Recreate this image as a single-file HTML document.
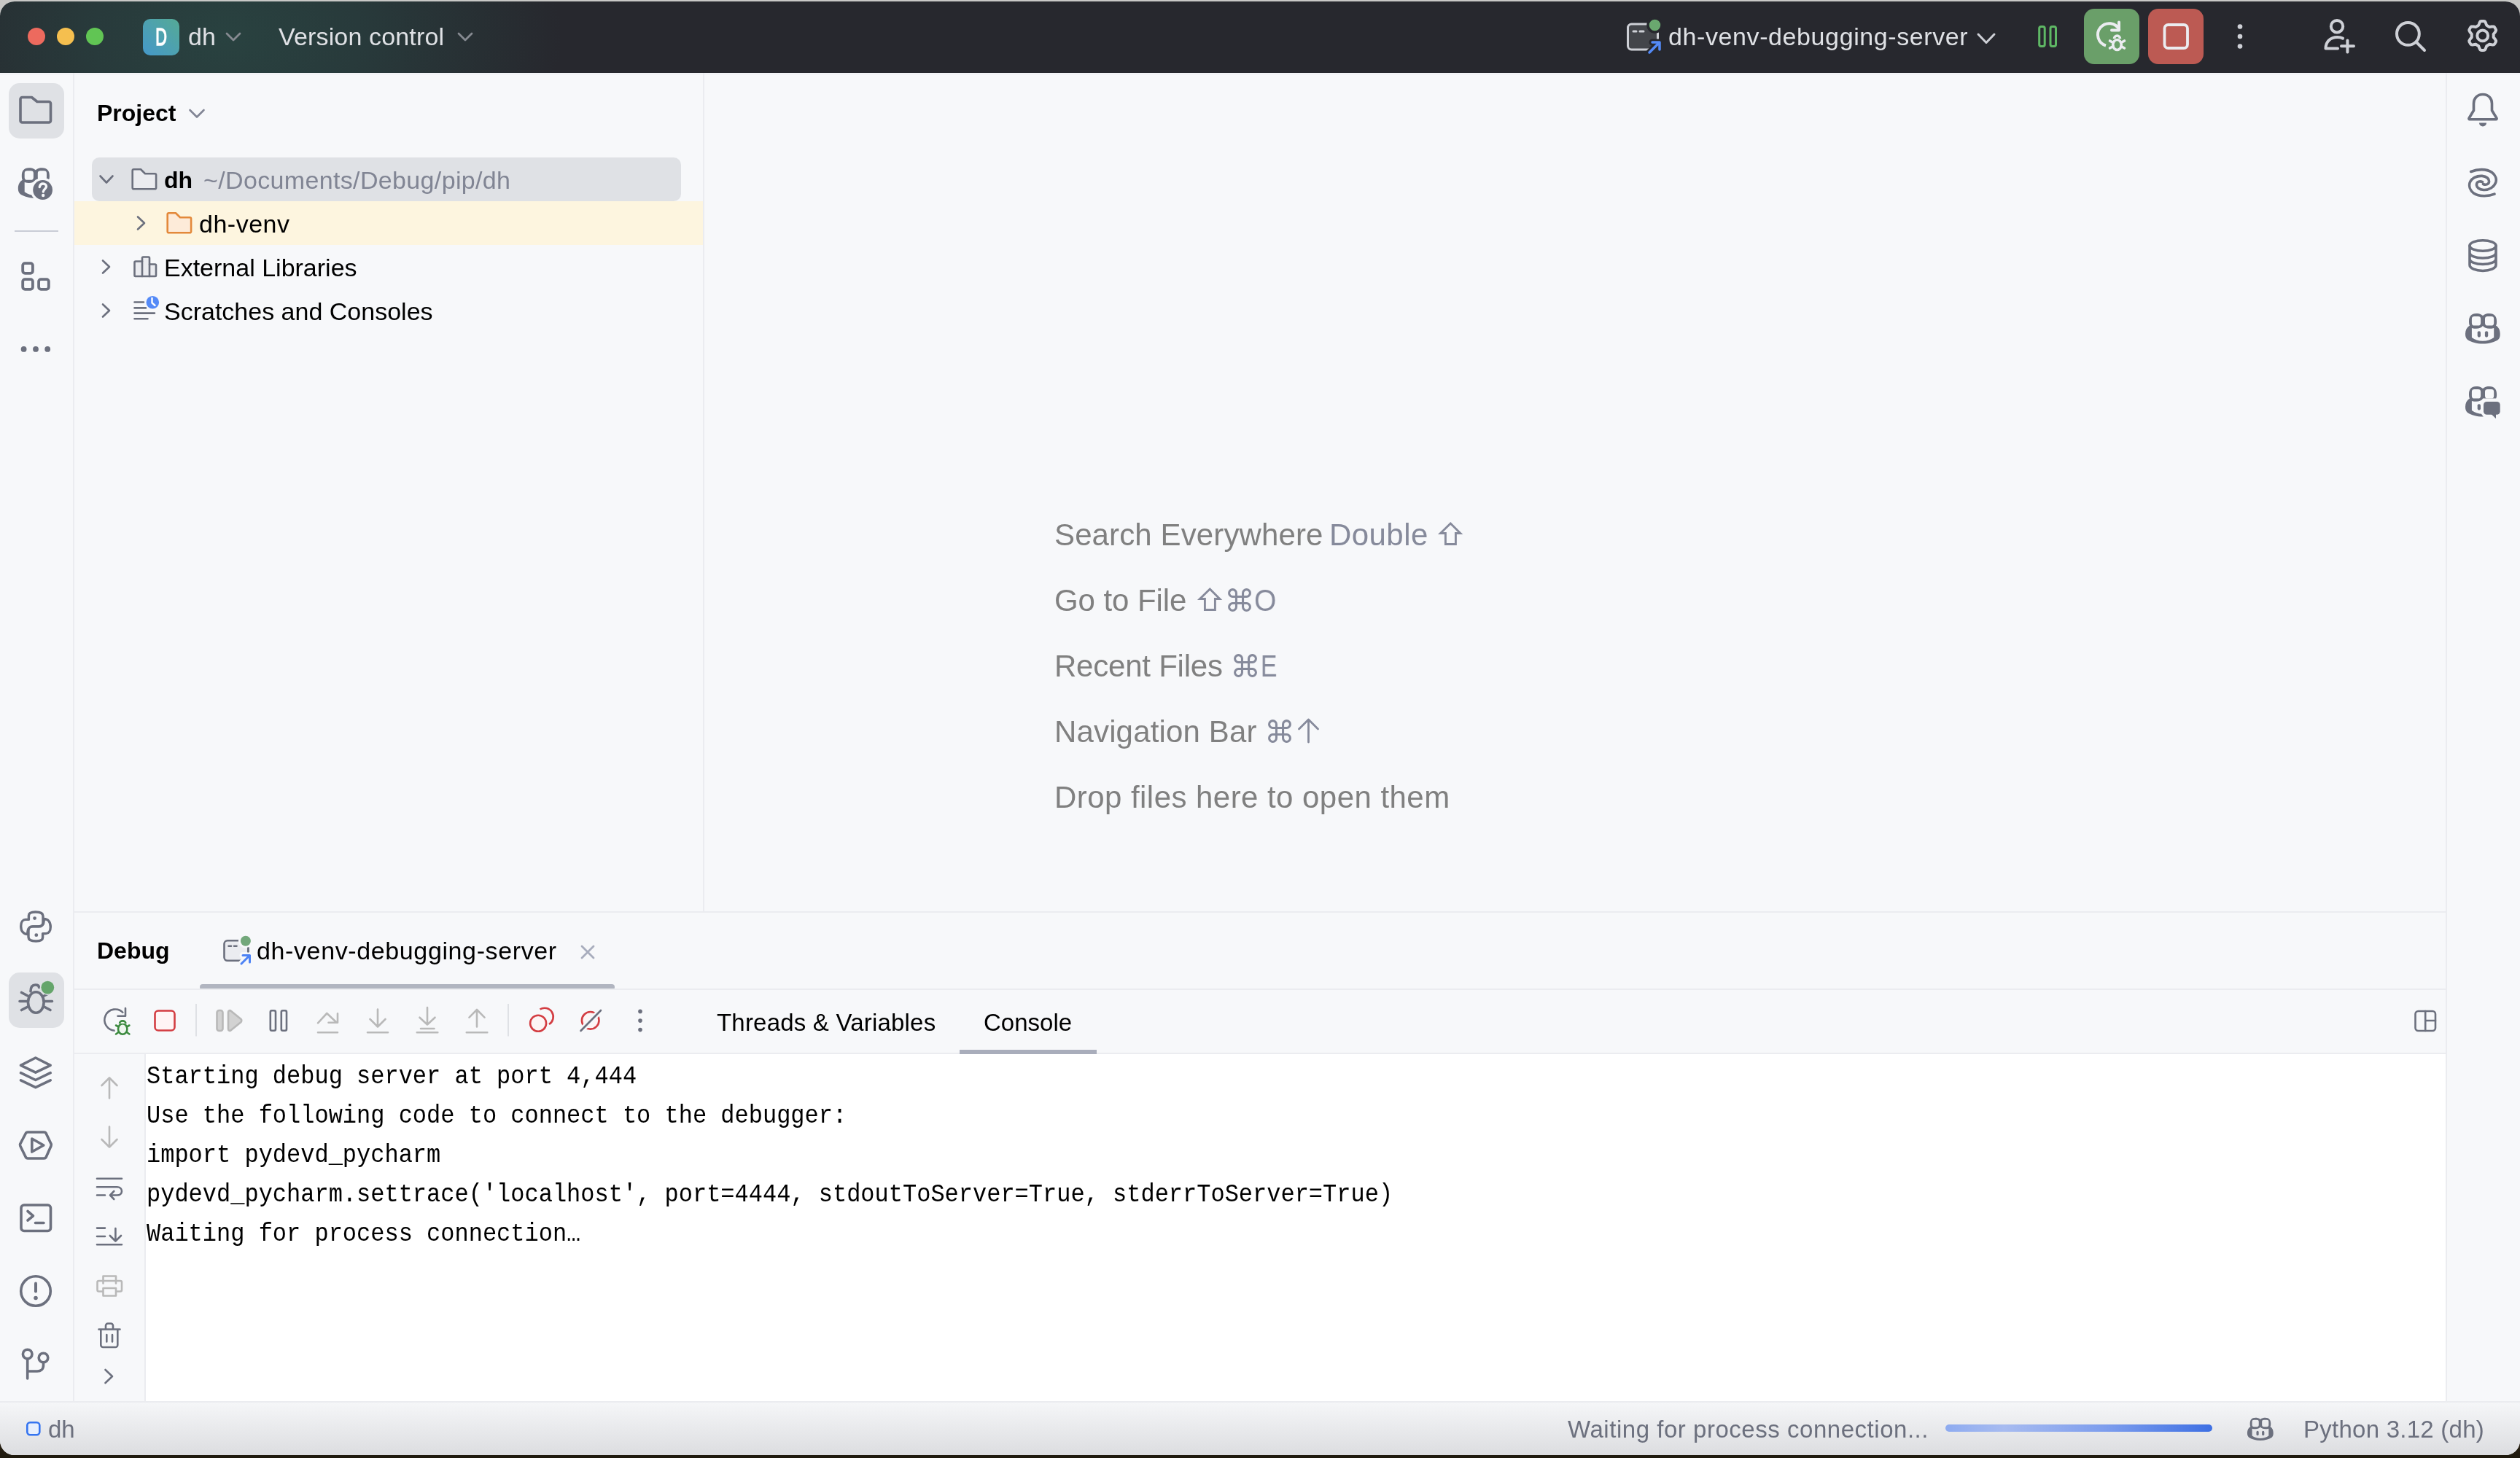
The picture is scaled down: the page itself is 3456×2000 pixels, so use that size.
<!DOCTYPE html>
<html><head><meta charset="utf-8">
<style>
html,body{margin:0;padding:0;width:3456px;height:2000px;overflow:hidden;}
body{position:relative;background:linear-gradient(180deg,#c8c8c6 0,#c8c8c6 40px,#3a3a3c 80px,#2a2a2c 1900px,#2a2114 1975px,#1f1a0e 2000px);font-family:"Liberation Sans",sans-serif;}
.a{position:absolute;}
#win{position:absolute;left:0;top:0;width:3456px;height:2000px;clip-path:inset(2px 0 4px 0 round 20px);background:#f7f8fa;}
#title{left:0;top:0;width:3456px;height:100px;background:radial-gradient(ellipse 460px 300px at 310px 50px,#294240 0%,#283a3b 40%,#27282e 100%);}
.t{white-space:nowrap;line-height:normal;will-change:transform;}
.bd{background:#ebecf0;}
.con{left:201px;font-family:"Liberation Mono",monospace;font-size:32px;line-height:54px;color:#000;white-space:pre;transform:scaleY(1.1);transform-origin:0 36px;}
svg{position:absolute;left:0;top:0;}
.s{fill:none;stroke:#6c707e;stroke-width:3.6;stroke-linecap:round;stroke-linejoin:round;}
.s25{fill:none;stroke:#6c707e;stroke-width:2.6;stroke-linecap:round;stroke-linejoin:round;}
.dis{fill:none;stroke:#b9b9b9;stroke-width:2.6;stroke-linecap:round;stroke-linejoin:round;}
.w{fill:none;stroke:#ced0d6;stroke-width:4;stroke-linecap:round;stroke-linejoin:round;}
</style></head><body>
<div id="win">
  <div id="title" class="a"></div>
  <div class="a t" style="left:196px;top:26px;width:50px;height:50px;border-radius:10px;background:linear-gradient(225deg,#55aa96,#4598ca)"></div>
  <div class="a t" style="left:196px;top:30.5px;width:50px;text-align:center;color:#fff;font-size:34px;-webkit-text-stroke:1.6px #fff;transform:scaleX(0.64);">D</div>
  <div class="a t" style="left:258px;top:31px;font-size:34px;color:#dfe1e5;">dh</div>
  <div class="a t" style="left:382px;top:31px;font-size:34px;color:#dfe1e5;letter-spacing:0.15px;">Version control</div>
  <div class="a t" style="left:2288px;top:31px;font-size:34px;color:#dfe1e5;letter-spacing:0.6px;">dh-venv-debugging-server</div>

  <!-- borders -->
  <div class="a bd" style="left:0;top:101px;width:3456px;height:1px"></div>
  <div class="a bd" style="left:100px;top:100px;width:2px;height:1822px"></div>
  <div class="a bd" style="left:964px;top:100px;width:2px;height:1150px"></div>
  <div class="a bd" style="left:3354px;top:100px;width:2px;height:1822px"></div>
  <div class="a bd" style="left:102px;top:1250px;width:3252px;height:2px"></div>

  <!-- PROJECT PANEL -->
  <div class="a t" style="left:133px;top:137px;font-size:32px;font-weight:bold;color:#000;">Project</div>
  <div class="a" style="left:126px;top:216px;width:808px;height:60px;border-radius:10px;background:#dfe1e5"></div>
  <div class="a" style="left:102px;top:276px;width:862px;height:60px;background:#fdf5df"></div>
  <div class="a t" style="left:225px;top:229px;font-size:32px;font-weight:bold;color:#000;">dh</div>
  <div class="a t" style="left:279px;top:228px;font-size:34px;color:#818594;letter-spacing:0.35px;">~/Documents/Debug/pip/dh</div>
  <div class="a t" style="left:273px;top:288px;font-size:34px;color:#000;letter-spacing:0.5px;">dh-venv</div>
  <div class="a t" style="left:225px;top:348px;font-size:34px;color:#000;">External Libraries</div>
  <div class="a t" style="left:225px;top:408px;font-size:34px;color:#000;">Scratches and Consoles</div>

  <!-- EDITOR EMPTY -->
  <div class="a t" style="left:1446px;top:710px;font-size:42px;color:#808080;letter-spacing:0.12px;">Search Everywhere</div>
  <div class="a t" style="left:1823px;top:710px;font-size:42px;color:#868a9b;letter-spacing:0.44px;">Double</div>
  <div class="a t" style="left:1446px;top:800px;font-size:42px;color:#808080;letter-spacing:-0.07px;">Go to File</div>
  <div class="a t" style="left:1678.5px;top:800px;font-size:42px;color:#868a9b;">⌘</div>
  <div class="a t" style="left:1720.4px;top:800px;font-size:42px;color:#868a9b;transform:scaleX(0.93);transform-origin:0 0;">O</div>
  <div class="a t" style="left:1446px;top:890px;font-size:42px;color:#808080;letter-spacing:-0.23px;">Recent Files</div>
  <div class="a t" style="left:1687px;top:890px;font-size:42px;color:#868a9b;">⌘</div>
  <div class="a t" style="left:1728.5px;top:890px;font-size:42px;color:#868a9b;transform:scaleX(0.8);transform-origin:0 0;">E</div>
  <div class="a t" style="left:1446px;top:980px;font-size:42px;color:#808080;letter-spacing:0.15px;">Navigation Bar</div>
  <div class="a t" style="left:1733.5px;top:980px;font-size:42px;color:#868a9b;">⌘</div>
  <div class="a t" style="left:1446px;top:1070px;font-size:42px;color:#808080;letter-spacing:0.45px;">Drop files here to open them</div>

  <!-- BOTTOM PANEL -->
  <div class="a t" style="left:133px;top:1286px;font-size:32px;font-weight:bold;color:#000;">Debug</div>
  <div class="a t" style="left:352px;top:1285px;font-size:34px;color:#000;letter-spacing:0.62px;">dh-venv-debugging-server</div>
  <div class="a" style="left:274px;top:1350px;width:569px;height:8px;border-radius:4px;background:#b1b5c0"></div>
  <div class="a bd" style="left:102px;top:1356px;width:3252px;height:2px"></div>
  <div class="a t" style="left:983px;top:1384px;font-size:33px;color:#000;letter-spacing:0.2px;">Threads &amp; Variables</div>
  <div class="a t" style="left:1349px;top:1384px;font-size:33px;color:#000;">Console</div>
  <div class="a bd" style="left:102px;top:1444px;width:3252px;height:2px"></div>
  <div class="a" style="left:1316px;top:1440px;width:188px;height:6px;background:#a9adbb"></div>
  <div class="a" style="left:200px;top:1446px;width:3154px;height:476px;background:#fff"></div>
  <div class="a bd" style="left:198px;top:1446px;width:2px;height:476px"></div>
  <div class="a t con" style="top:1451px;">Starting debug server at port 4,444</div>
  <div class="a t con" style="top:1505px;">Use the following code to connect to the debugger:</div>
  <div class="a t con" style="top:1559px;">import pydevd_pycharm</div>
  <div class="a t con" style="top:1613px;">pydevd_pycharm.settrace('localhost', port=4444, stdoutToServer=True, stderrToServer=True)</div>
  <div class="a t con" style="top:1667px;">Waiting for process connection…</div>

  <!-- STATUS BAR -->
  <div class="a bd" style="left:0;top:1922px;width:3456px;height:2px"></div>
  <div class="a" style="left:0;top:1924px;width:3456px;height:72px;background:linear-gradient(180deg,#f5f6f8,#dcdde0)"></div>
  <div class="a t" style="left:66px;top:1942px;font-size:33px;color:#6c707e;">dh</div>
  <div class="a t" style="left:2150px;top:1942px;font-size:33px;color:#6c707e;letter-spacing:0.53px;">Waiting for process connection...</div>
  <div class="a" style="left:2668px;top:1954px;width:366px;height:10px;border-radius:5px;background:linear-gradient(90deg,#8eabf0 0%,#a7bbf0 22%,#7d9ded 60%,#3d6fe3 100%)"></div>
  <div class="a t" style="left:3159px;top:1942px;font-size:33px;color:#6c707e;letter-spacing:0.25px;">Python 3.12 (dh)</div>

  <svg width="3456" height="2000" viewBox="0 0 3456 2000">
    <!-- traffic lights -->
    <circle cx="50" cy="50" r="12" fill="#ed6a5e"/>
    <circle cx="90" cy="50" r="12" fill="#f5bf4f"/>
    <circle cx="130" cy="50" r="12" fill="#61c554"/>
    <!-- title chevrons -->
    <polyline points="311,46 320,55 329,46" fill="none" stroke="#868a91" stroke-width="2.8" stroke-linecap="round" stroke-linejoin="round"/>
    <polyline points="629,46 638,55 647,46" fill="none" stroke="#868a91" stroke-width="2.8" stroke-linecap="round" stroke-linejoin="round"/>
    <!-- run config icon -->
    <rect x="2232.5" y="33" width="41" height="35" rx="5" fill="#43454a" stroke="#ced0d6" stroke-width="3"/>
    <line x1="2240" y1="43" x2="2244" y2="43" stroke="#ced0d6" stroke-width="3" stroke-linecap="round"/>
    <line x1="2249" y1="43" x2="2254" y2="43" stroke="#ced0d6" stroke-width="3" stroke-linecap="round"/>
    <circle cx="2269.5" cy="34.5" r="9.5" fill="#6aa86f" stroke="#27282e" stroke-width="3.5"/>
    <path d="M2262 72 L2276 58 M2266 58 H2276 V68" fill="none" stroke="#27282e" stroke-width="9" stroke-linecap="round" stroke-linejoin="round"/>
    <path d="M2262 72 L2276 58 M2266 58 H2276 V68" fill="none" stroke="#548af7" stroke-width="3.5" stroke-linecap="round" stroke-linejoin="round"/>
    <polyline points="2713,47 2724,58.5 2735,47" fill="none" stroke="#ced0d6" stroke-width="3" stroke-linecap="round" stroke-linejoin="round"/>
    <!-- pause green -->
    <rect x="2796.7" y="36.5" width="7.5" height="27" rx="2.5" fill="none" stroke="#5fb865" stroke-width="3"/>
    <rect x="2812" y="36.5" width="7.5" height="27" rx="2.5" fill="none" stroke="#5fb865" stroke-width="3"/>
    <!-- rerun debug button -->
    <rect x="2858" y="12" width="76" height="76" rx="14" fill="#6a9f69"/>
    <path d="M2888 62.5 A15.5 15.5 0 1 1 2906.5 41" fill="none" stroke="#ebecf0" stroke-width="4" stroke-linecap="butt"/>
    <path d="M2896 41.5 H2906 V30.5" fill="none" stroke="#ebecf0" stroke-width="4" stroke-linecap="round" stroke-linejoin="round"/>
    <circle cx="2903.5" cy="60" r="13" fill="#6a9f69"/>
    <ellipse cx="2903.5" cy="61.5" rx="5.8" ry="7" fill="none" stroke="#ebecf0" stroke-width="3.6"/>
    <path d="M2899.5 53 a4 4 0 0 1 8 0" fill="none" stroke="#ebecf0" stroke-width="3.6"/>
    <path d="M2893.5 56 L2898 58.5 M2913.5 56 L2909 58.5 M2893.5 66 L2898 63.5 M2913.5 66 L2909 63.5" fill="none" stroke="#ebecf0" stroke-width="3.6" stroke-linecap="round"/>
    <!-- stop button -->
    <rect x="2946" y="12" width="76" height="76" rx="14" fill="#bc5a53"/>
    <rect x="2968.5" y="34" width="31.5" height="32" rx="5" fill="none" stroke="#ebecf0" stroke-width="3.8"/>
    <!-- kebab -->
    <circle cx="3072" cy="36.5" r="3.3" fill="#ced0d6"/>
    <circle cx="3072" cy="50" r="3.3" fill="#ced0d6"/>
    <circle cx="3072" cy="63.5" r="3.3" fill="#ced0d6"/>
    <!-- person add -->
    <circle cx="3205" cy="36.2" r="8.2" class="w"/>
    <path d="M3206 66.5 H3189.5 C3189.5 57 3196 51 3205.5 51 C3208.5 51 3211 51.6 3213 52.6" class="w" stroke-linecap="butt"/>
    <path d="M3219.4 55.5 V71.5 M3211 63.3 H3228" class="w"/>
    <!-- search -->
    <circle cx="3302.4" cy="46.4" r="15.4" class="w"/>
    <path d="M3314.5 58.5 L3325 69" class="w"/>
    <!-- gear -->
    <path d="M3404.7,28.9L3405.7,28.9L3406.8,29.0L3407.8,29.4L3408.6,30.6L3409.2,32.0L3409.7,33.4L3410.2,34.6L3410.8,35.2L3411.5,35.5L3412.2,35.9L3412.9,36.3L3413.5,36.8L3414.3,37.0L3415.6,36.8L3417.1,36.5L3418.6,36.4L3420.0,36.5L3420.9,37.1L3421.5,38.0L3422.0,38.9L3422.5,39.8L3423.0,40.8L3423.1,41.8L3422.4,43.1L3421.6,44.4L3420.7,45.5L3419.8,46.5L3419.6,47.3L3419.7,48.1L3419.7,48.9L3419.7,49.7L3419.6,50.5L3419.8,51.3L3420.7,52.3L3421.6,53.4L3422.4,54.7L3423.1,56.0L3423.0,57.0L3422.5,58.0L3422.0,58.9L3421.5,59.8L3420.9,60.7L3420.0,61.3L3418.6,61.4L3417.1,61.3L3415.6,61.0L3414.3,60.8L3413.5,61.0L3412.9,61.5L3412.2,61.9L3411.5,62.3L3410.8,62.6L3410.2,63.2L3409.7,64.4L3409.2,65.8L3408.6,67.2L3407.8,68.4L3406.8,68.8L3405.7,68.9L3404.7,68.9L3403.7,68.9L3402.6,68.8L3401.6,68.4L3400.8,67.2L3400.2,65.8L3399.7,64.4L3399.2,63.2L3398.6,62.6L3397.9,62.3L3397.2,61.9L3396.5,61.5L3395.9,61.0L3395.1,60.8L3393.8,61.0L3392.3,61.3L3390.8,61.4L3389.4,61.3L3388.5,60.7L3387.9,59.8L3387.4,58.9L3386.9,58.0L3386.4,57.0L3386.3,56.0L3387.0,54.7L3387.8,53.4L3388.7,52.3L3389.6,51.3L3389.8,50.5L3389.7,49.7L3389.7,48.9L3389.7,48.1L3389.8,47.3L3389.6,46.5L3388.7,45.5L3387.8,44.4L3387.0,43.1L3386.3,41.8L3386.4,40.8L3386.9,39.8L3387.4,38.9L3387.9,38.0L3388.5,37.1L3389.4,36.5L3390.8,36.4L3392.3,36.5L3393.8,36.8L3395.1,37.0L3395.9,36.8L3396.5,36.3L3397.2,35.9L3397.9,35.5L3398.6,35.2L3399.2,34.6L3399.7,33.4L3400.2,32.0L3400.8,30.6L3401.6,29.4L3402.6,29.0L3403.7,28.9Z" class="w"/>
    <circle cx="3404.7" cy="48.9" r="7.4" class="w"/>

    <!-- LEFT STRIP -->
    <rect x="12" y="114" width="76" height="76" rx="15" fill="#dfe1e5"/>
    <path d="M30.5 168 H67 a2.5 2.5 0 0 0 2.5 -2.5 V142 a2.5 2.5 0 0 0 -2.5 -2.5 H51 L43.5 133.5 H30.5 a2.5 2.5 0 0 0 -2.5 2.5 V165.5 a2.5 2.5 0 0 0 2.5 2.5Z" class="s"/>
    <!-- copilot ? -->
    <g transform="translate(-3356.2,-199.8)"><use href="#cop"/></g>
    <circle cx="58.6" cy="260.5" r="16.8" fill="#f7f8fa"/>
    <circle cx="58.6" cy="260.5" r="13.4" fill="#6c707e"/>
    <path d="M54.3 256.5 C54.8 253 57 252 59 252 C62 252 63.5 254 63.5 256 C63.5 259 59.3 259.5 59.3 263" fill="none" stroke="#f7f8fa" stroke-width="3.3" stroke-linecap="round"/>
    <circle cx="59.2" cy="268" r="2.2" fill="#f7f8fa"/>
    <line x1="20" y1="317" x2="80" y2="317" stroke="#c9ccd6" stroke-width="2"/>
    <!-- structure -->
    <rect x="31.2" y="361.1" width="13.7" height="13.7" rx="3" class="s" style="stroke-width:3.8"/>
    <rect x="31.2" y="383.1" width="13.7" height="13.7" rx="3" class="s" style="stroke-width:3.8"/>
    <rect x="53.1" y="383.1" width="13.7" height="13.7" rx="3" class="s" style="stroke-width:3.8"/>
    <circle cx="32.6" cy="478.9" r="3.9" fill="#6c707e"/>
    <circle cx="49" cy="478.9" r="3.9" fill="#6c707e"/>
    <circle cx="65.2" cy="478.9" r="3.9" fill="#6c707e"/>
    <!-- python -->
    <path d="M39.4 1261.4 V1256 C39.4 1252.5 43 1251 48.7 1251 C54 1251 59 1251.5 59 1256.5 V1265 C59 1268.5 57 1270.9 53.5 1270.9 H45.5 C41 1270.9 37.9 1273.5 37.9 1278 V1281.5 C32 1281.5 28.7 1277 28.7 1270.5 C28.7 1264.5 31.5 1261.4 35 1261.4 H39.4" class="s" style="stroke-width:3.4"/>
    <path d="M58.6 1280.6 V1286 C58.6 1289.5 55 1291 49.3 1291 C44 1291 39 1290.5 39 1285.5 V1277 C39 1273.5 41 1270.9 44.5 1270.9 H52.5 C57 1270.9 60.1 1268.5 60.1 1264 V1260.5 C66 1260.5 69.3 1265 69.3 1271.5 C69.3 1277.5 66.5 1280.6 63 1280.6 H58.6" class="s" style="stroke-width:3.4"/>
    <circle cx="47.6" cy="1259.6" r="2.4" fill="#6c707e"/>
    <circle cx="49.8" cy="1282.7" r="2.4" fill="#6c707e"/>
    <!-- debug selected -->
    <rect x="12" y="1334" width="76" height="76" rx="15" fill="#dfe1e5"/>
    <ellipse cx="49.3" cy="1375" rx="10.8" ry="14.2" class="s"/>
    <path d="M42 1360 C42 1353.5 45 1351 48.5 1351 C51.5 1351 53.5 1352 53.5 1354.5" class="s"/>
    <path d="M29.5 1361.5 L38 1366 M27 1373.5 H38 M29.5 1385.5 L38 1381 M69 1361.5 L60.5 1366 M71.5 1373.5 H60.5 M69 1385.5 L60.5 1381" class="s"/>
    <circle cx="65.3" cy="1354.6" r="10.5" fill="#dfe1e5"/>
    <circle cx="65.3" cy="1354.6" r="8.9" fill="#65a56b"/>
    <!-- layers -->
    <path d="M28.5 1461.3 L48.8 1451 L69.2 1461.3 L48.8 1471.2 Z" class="s"/>
    <path d="M28.5 1471.7 L48.8 1481.5 L69.2 1471.7 M28.5 1481.9 L48.8 1491.7 L69.2 1481.9" class="s"/>
    <!-- services -->
    <path d="M38 1553 H60.5 a3 3 0 0 1 2.6 1.5 L70 1569 a3 3 0 0 1 0 3 L63.1 1587.5 a3 3 0 0 1 -2.6 1.5 H38 a3 3 0 0 1 -2.6 -1.5 L27.8 1572 a3 3 0 0 1 0 -3 L35.4 1554.5 a3 3 0 0 1 2.6 -1.5Z" class="s"/>
    <path d="M43.8 1562 L59.8 1571 L43.8 1580Z" class="s"/>
    <!-- terminal -->
    <rect x="29" y="1653" width="40.5" height="35.5" rx="4" class="s"/>
    <path d="M38 1661.5 L45.5 1667.8 L38 1674 M48.5 1677.5 H60" class="s"/>
    <!-- problems -->
    <circle cx="49" cy="1771" r="20.3" class="s"/>
    <line x1="49" y1="1760.5" x2="49" y2="1771.5" class="s" style="stroke-width:4"/>
    <circle cx="49" cy="1780.5" r="2.8" fill="#6c707e"/>
    <!-- git -->
    <circle cx="37.7" cy="1857.5" r="6.3" class="s"/>
    <circle cx="59.5" cy="1862.5" r="6.3" class="s"/>
    <path d="M37.7 1864 V1891 M59.5 1869 V1873 C59.5 1878 56 1881 51 1881 H37.7" class="s"/>

    <!-- PROJECT TREE -->
    <polyline points="260.5,151 270,160.5 279.5,151" class="s25" style="stroke:#818594"/>
    <polyline points="137.5,241.5 146,250.5 154.5,241.5" class="s25"/>
    <path d="M183.5 259.3 H212.3 a1.8 1.8 0 0 0 1.8 -1.8 V240 a1.8 1.8 0 0 0 -1.8 -1.8 H199 L193 232.3 H183.5 a1.8 1.8 0 0 0 -1.8 1.8 V257.5 a1.8 1.8 0 0 0 1.8 1.8Z" fill="#ebecf0" class="s25" style="fill:#ebecf0"/>
    <polyline points="189,297.5 198,306 189,314.5" class="s25"/>
    <path d="M231.5 319.3 H260.3 a1.8 1.8 0 0 0 1.8 -1.8 V300 a1.8 1.8 0 0 0 -1.8 -1.8 H247 L241 292.3 H231.5 a1.8 1.8 0 0 0 -1.8 1.8 V317.5 a1.8 1.8 0 0 0 1.8 1.8Z" style="fill:#fdebd9;stroke:#e3893b;stroke-width:2.6;stroke-linejoin:round"/>
    <polyline points="141,357.5 150,366 141,374.5" class="s25"/>
    <path d="M185.5 379 H213 a1 1 0 0 0 1 -1 V364 a1.5 1.5 0 0 0 -1.5 -1.5 H205 V354 a1.5 1.5 0 0 0 -1.5 -1.5 H196.5 a1.5 1.5 0 0 0 -1.5 1.5 V358.5 H186 a1.5 1.5 0 0 0 -1.5 1.5 V378 a1 1 0 0 0 1 1Z" style="fill:#ebecf0" class="s25"/>
    <path d="M195 358.5 V379 M205 362.5 V379" class="s25"/>
    <polyline points="141,417.5 150,426 141,434.5" class="s25"/>
    <path d="M184.5 414.5 H197 M184.5 422.4 H200 M184.5 429.6 H212 M184.5 437.2 H202.5" class="s25"/>
    <circle cx="209.3" cy="414.8" r="10.5" fill="#f7f8fa"/>
    <circle cx="209.3" cy="414.8" r="8.8" fill="#548af7"/>
    <path d="M208.5 409 V415.5 L212.5 419" fill="none" stroke="#fff" stroke-width="2.4" stroke-linecap="round"/>

    <!-- EDITOR HINT ARROWS -->
    <path d="M1982.4 746.5 V731.5 H1975.5 L1989.3 718 L2002.8 731.5 H1996.4 V746.5 Z" fill="none" stroke="#868a9b" stroke-width="2.9"/>
    <path d="M1652.4 836.5 V821.5 H1645.5 L1659.3 808 L1672.8 821.5 H1666.4 V836.5 Z" fill="none" stroke="#868a9b" stroke-width="2.9"/>
    <path d="M1794.5 1018 V988 M1781.5 1000 L1794.5 987 L1807.5 1000" fill="none" stroke="#868a9b" stroke-width="2.8" stroke-linecap="round" stroke-linejoin="round"/>

    <!-- RIGHT STRIP -->
    <path d="M3405 129.5 C3397 129.5 3392.5 135.5 3392.5 142 V151.5 L3386 162.2 a1 1 0 0 0 1 1.5 H3423 a1 1 0 0 0 1 -1.5 L3417.5 151.5 V142 C3417.5 135.5 3413 129.5 3405 129.5Z" class="s"/>
    <path d="M3400 168.5 a5 5 0 0 0 10 0Z" fill="#6c707e"/>
    <path d="M3388.7 235.5 C3397 232 3410 231 3417.5 236.5 C3423 240.5 3424 246 3422.8 250 C3420.5 257 3413 261 3406 260.5 C3400 260 3396 257 3396.5 252.5 C3397 249 3401 248 3404.5 249.6 M3421 266.2 C3413 269.5 3400 270 3392.5 265 C3387 261 3386 255 3387 251 C3389.5 244 3397 241 3404 241.4 C3410 242 3414 245 3413.5 249.5 C3413 253 3409 254 3405.5 252.5" class="s"/>
    <ellipse cx="3405" cy="337" rx="18" ry="7.3" class="s"/>
    <path d="M3387 337 V363.5 C3387 368 3395 371.5 3405 371.5 C3415 371.5 3423 368 3423 363.5 V337 M3387 346.5 C3387 351 3395 354 3405 354 C3415 354 3423 351 3423 346.5 M3387 355 C3387 359.5 3395 362.5 3405 362.5 C3415 362.5 3423 359.5 3423 355" class="s"/>
    <!-- copilot -->
    <defs>
      <g id="cop">
        <path fill-rule="evenodd" fill="#6c707e" d="M3405 433 C3402 430.5 3399 430 3396 430 C3389 430 3386 434 3386 441 C3386 444 3386.5 446 3387 446.5 C3383 449 3381 453 3381 458 C3381 462 3382 464 3384 466 C3389 469.5 3397 471.6 3405 471.6 C3413 471.6 3421 469.5 3426 466 C3428 464 3428.7 462 3428.7 458 C3428.7 453 3427 449 3423 446.5 C3423.7 446 3424.1 444 3424.1 441 C3424.1 434 3421 430 3414 430 C3411 430 3408 430.5 3405 433Z M3393.5 434 H3398.5 C3401 434 3402.1 435 3402.1 437.5 V443 C3402.1 445.5 3401 446.6 3398.5 446.6 H3393.5 C3391 446.6 3389.9 445.5 3389.9 443 V437.5 C3389.9 435 3391 434 3393.5 434Z M3411.6 434 H3416.6 C3419.1 434 3420.2 435 3420.2 437.5 V443 C3420.2 445.5 3419.1 446.6 3416.6 446.6 H3411.6 C3409.1 446.6 3408 445.5 3408 443 V437.5 C3408 435 3409.1 434 3411.6 434Z M3389.9 449.9 C3392 450.5 3394 450.7 3396 450.7 C3400 450.7 3403 449.5 3405 447 C3407 449.5 3410 450.7 3414 450.7 C3416 450.7 3418 450.5 3420.2 449.9 V463 C3416 466 3411 467.7 3405 467.7 C3399 467.7 3394 466 3389.9 463Z"/>
      </g>
    </defs>
    <use href="#cop"/>
    <rect x="3397.7" y="454.2" width="4.3" height="8.5" rx="2.15" fill="#6c707e"/>
    <rect x="3407.9" y="454.2" width="4.3" height="8.5" rx="2.15" fill="#6c707e"/>
    <g transform="translate(0,100)">
      <use href="#cop"/><rect x="3397.7" y="454.2" width="4.3" height="8.5" rx="2.15" fill="#6c707e"/>
      <path d="M3405 446.6 H3434 V480 H3405.8 V471.6 L3402.4 467.1 L3404.5 449.5Z" fill="#f7f8fa"/>
      <rect x="3406" y="451" width="22.7" height="17.8" rx="4.5" fill="#6c707e"/>
      <path d="M3416.5 468 L3423 474.2 V468Z" fill="#6c707e"/>
    </g>
    <!-- DEBUG TAB -->
    <rect x="307.5" y="1290.3" width="33" height="27.5" rx="4.5" class="s25" style="fill:#ebecf0"/>
    <path d="M313.5 1297.7 H317 M321 1297.7 H324.5" class="s25"/>
    <circle cx="336.9" cy="1290.8" r="10" fill="#f7f8fa"/>
    <path d="M331 1322 L342.5 1310.5 M333 1310.5 H342.5 V1320" fill="none" stroke="#f7f8fa" stroke-width="9" stroke-linecap="round" stroke-linejoin="round"/>
    <path d="M340.3 1300.5 V1305.5" class="s25"/>
    <circle cx="336.9" cy="1290.8" r="7" fill="#73a87b"/>
    <path d="M331 1322 L342.5 1310.5 M333 1310.5 H342.5 V1320" fill="none" stroke="#4d83f5" stroke-width="3" stroke-linecap="round" stroke-linejoin="round"/>
    <path d="M798 1298 L814 1314 M814 1298 L798 1314" class="s25" style="stroke:#a8adbd;stroke-width:2.8"/>

    <!-- DEBUG TOOLBAR -->
    <path d="M157.8 1413.7 A14.6 14.6 0 1 1 169 1389.5" fill="none" stroke="#6c707e" stroke-width="2.6" stroke-linecap="butt"/>
    <path d="M161.5 1393.8 H172 V1383" class="s25"/>
    <circle cx="168.2" cy="1410" r="11" fill="#f7f8fa"/>
    <ellipse cx="168.2" cy="1411.5" rx="6.2" ry="7.2" style="fill:#eef6ee;stroke:#3b8a3e;stroke-width:2.6"/>
    <path d="M164 1404 a4.2 3.6 0 0 1 8.4 0" style="fill:#eef6ee;stroke:#3b8a3e;stroke-width:2.6"/>
    <path d="M159 1406.5 L162.5 1408.5 M177.4 1406.5 L173.9 1408.5 M159 1418.5 L162.5 1416 M177.4 1418.5 L173.9 1416" fill="none" stroke="#3b8a3e" stroke-width="2.6" stroke-linecap="round"/>
    <rect x="212.5" y="1386.5" width="27" height="27" rx="4.5" style="fill:#fff5f5;stroke:#d33d42;stroke-width:2.6"/>
    <line x1="269" y1="1377" x2="269" y2="1421.5" stroke="#dfe1e5" stroke-width="2"/>
    <rect x="297.5" y="1386" width="8" height="28" rx="3" style="fill:#d2d2d2;stroke:#b9b9b9;stroke-width:2.6"/>
    <path d="M313 1388.5 C313 1386 315.5 1385.5 317 1387 L330.5 1398 C331.5 1399 331.5 1401 330.5 1402 L317 1413 C315.5 1414.5 313 1414 313 1411.5Z" style="fill:#d2d2d2;stroke:#b9b9b9;stroke-width:2.6"/>
    <rect x="370.8" y="1386.2" width="7.2" height="27.5" rx="2" class="s25"/>
    <rect x="385.8" y="1386.2" width="7.2" height="27.5" rx="2" class="s25"/>
    <path d="M436 1403.3 L448.3 1390 L461 1402 M450.5 1402.8 H463 V1390.3 M436 1416.2 H463" class="dis"/>
    <path d="M518 1384.5 V1408.5 M507.5 1398 L518 1408.5 L528.5 1398 M504 1416.2 H532" class="dis"/>
    <path d="M586 1382 V1405.5 M575.5 1395.7 L586 1405.5 L596.5 1395.7 M577 1411 H595.5 M571.8 1416.2 H600.3" class="dis"/>
    <path d="M654 1408.5 V1385 M643.5 1395.7 L654 1385 L664.5 1395.7 M639.8 1416.2 H668.3" class="dis"/>
    <line x1="697" y1="1377" x2="697" y2="1421.5" stroke="#dfe1e5" stroke-width="2"/>
    <path d="M740.5 1384.5 A11 11 0 1 1 753 1405" fill="none" stroke="#d33d42" stroke-width="2.6"/>
    <circle cx="738.1" cy="1403.7" r="11" style="fill:#fdf5f5;stroke:#d33d42;stroke-width:2.6"/>
    <circle cx="809.7" cy="1399.8" r="11.8" style="fill:#fdf5f5;stroke:#d33d42;stroke-width:2.6"/>
    <path d="M796.5 1414 L824 1386" fill="none" stroke="#f7f8fa" stroke-width="8" stroke-linecap="butt"/>
    <path d="M796.5 1414 L824 1386" class="s25"/>
    <circle cx="878" cy="1387.4" r="2.8" fill="#6c707e"/>
    <circle cx="878" cy="1400.1" r="2.8" fill="#6c707e"/>
    <circle cx="878" cy="1412.6" r="2.8" fill="#6c707e"/>
    <!-- layout icon -->
    <rect x="3312.5" y="1387" width="27.5" height="27" rx="4" class="s25"/>
    <path d="M3326.2 1387 V1414 M3326.2 1400 H3340" class="s25"/>

    <!-- CONSOLE GUTTER -->
    <path d="M150 1478.5 V1506.5 M139.5 1489 L150 1478.5 L160.5 1489" class="dis"/>
    <path d="M150 1545.5 V1573.5 M139.5 1563 L150 1573.5 L160.5 1563" class="dis"/>
    <path d="M133 1616.8 H167 M133 1628.2 H160.5 C164.5 1628.2 167 1630.8 167 1634 C167 1637.2 164.5 1639.5 160.5 1639.5 H151.5 M156.3 1634 L151 1639.5 L156.3 1645 M133 1639.5 H144" class="s25"/>
    <path d="M133 1684.6 H144 M133 1696 H144 M133 1707.3 H167 M158.4 1685 V1702.5 M150.8 1695 L158.4 1702.5 L166 1695" class="s25"/>
    <path d="M141.5 1760.5 V1750.5 H159 V1760.5 M141.5 1771.5 H135.5 a2 2 0 0 1 -2 -2 V1759 a2 2 0 0 1 2 -2 H165 a2 2 0 0 1 2 2 V1769.5 a2 2 0 0 1 -2 2 H159 M141.5 1767 H159 V1777.5 H141.5Z" class="dis"/>
    <path d="M135.5 1823.5 H164.5 M145 1823.5 V1818.5 a3 3 0 0 1 3 -3 H152 a3 3 0 0 1 3 3 V1823.5 M138.3 1823.5 V1845 a3 3 0 0 0 3 3 H158.3 a3 3 0 0 0 3 -3 V1823.5 M146.3 1831 V1840.5 M154 1831 V1840.5" class="s25"/>
    <polyline points="144.5,1879 154,1888 144.5,1897" class="s25"/>

    <!-- STATUS -->
    <rect x="37.3" y="1951.3" width="17" height="17" rx="4" style="fill:#e7effd;stroke:#3574f0;stroke-width:2.6"/>
    <g transform="translate(3099.85,1960.35) scale(0.75) translate(-3404.9,-450.85)"><use href="#cop"/><rect x="3397.7" y="454.2" width="4.3" height="8.5" rx="2.15" fill="#6c707e"/><rect x="3407.9" y="454.2" width="4.3" height="8.5" rx="2.15" fill="#6c707e"/></g>
  </svg>
</div>
</body></html>
